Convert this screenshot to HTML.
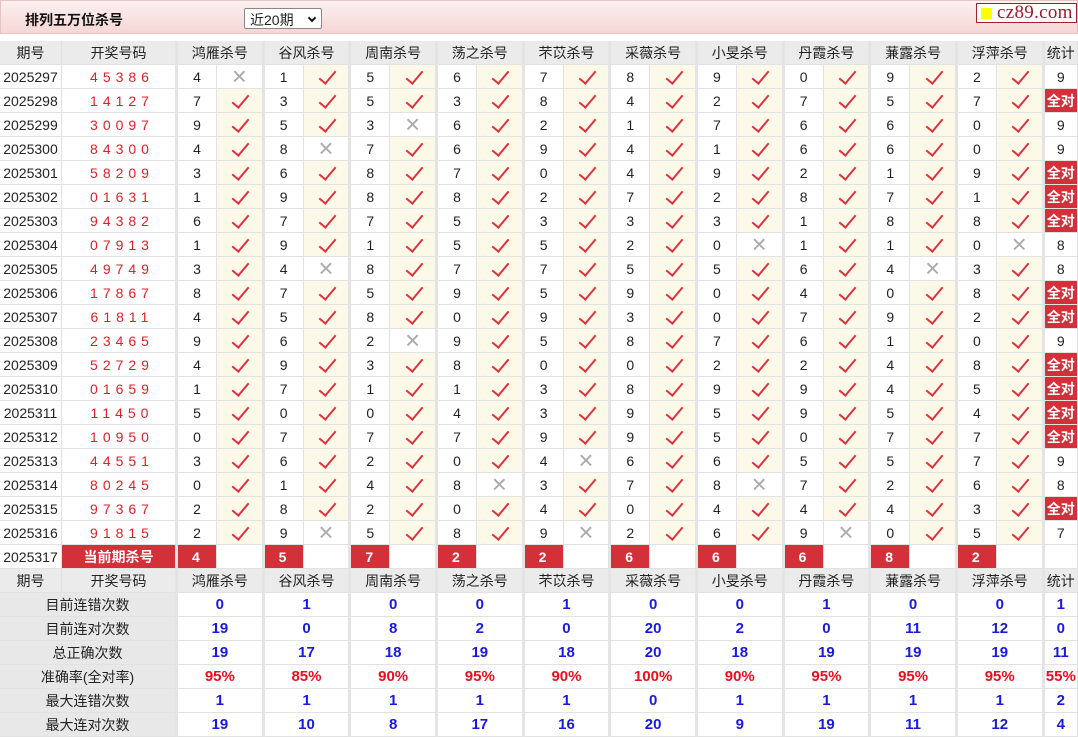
<!DOCTYPE html>
<html><head><meta charset="utf-8">
<style>
*{margin:0;padding:0;box-sizing:border-box}
body{width:1078px;height:737px;overflow:hidden;background:#fff;font-family:"Liberation Sans","Noto Sans CJK SC",sans-serif;font-size:14px;color:#222}
.top{position:absolute;left:0;top:0;width:1078px;height:34px;background:linear-gradient(#fdf0f0,#f6d6d6);border:1px solid #e4c4c4}
.title{position:absolute;left:24px;top:9px;font-weight:bold;font-size:14px;color:#111}
.sel{position:absolute;left:243px;top:7px;width:78px;height:21px;border:1px solid #888;background:#fff;font-size:14px;padding:1px 0 0 5px;border-radius:2px}
.sel b{position:absolute;right:6px;top:6px;width:6px;height:6px;border-right:2px solid #111;border-bottom:2px solid #111;transform:rotate(45deg)}
.logo{position:absolute;left:975px;top:2px;width:101px;height:20px;border:1px solid #a02030;background:#fff;font-family:"Liberation Serif",serif;font-size:19px;color:#a01828;line-height:17px;padding-left:20px;letter-spacing:0.3px}
.logo i{position:absolute;left:4px;top:4px;width:11px;height:11px;background:#ffff00}
table{position:absolute;left:0;top:41px;border-collapse:separate;border-spacing:0;table-layout:fixed;width:1078px}
td{height:24px;border-bottom:1px solid #e2e2e2;border-right:1px solid #e2e2e2;text-align:center;font-size:14px;padding:0;overflow:hidden;white-space:nowrap;position:relative}
tr.h td{background:#ebebeb;color:#222}
td.s{border-right:3px solid #e4e4e4}
td.c{color:#e0202a;letter-spacing:5px;padding-left:7px}
td.v{background:#fdf9e8}
td.v::after{content:"";position:absolute;left:50%;top:50%;width:7px;height:15px;margin:-10px 0 0 -3px;border-right:2px solid #e0303f;border-bottom:2px solid #e0303f;transform:rotate(40deg)}
td.x::after{content:"\00D7";position:absolute;left:0;right:0;top:-1px;font-size:26px;color:#aaa;line-height:24px;font-weight:normal}
td.a{background:#d3303a;color:#fff;font-weight:bold}
td.k{background:#d3303a;color:#fff;font-weight:bold;text-align:left;padding-left:14px}
td.l{background:#e8e8e8}
td.b{color:#1a1adb;font-weight:bold;font-size:15px}
td.r{color:#e8101a;font-weight:bold;font-size:15px}
</style></head><body>
<div class="top"><div class="title">排列五万位杀号</div><div class="sel">近20期<b></b></div><div class="logo"><i></i>cz89.com</div></div>
<table>
<colgroup><col style="width:62px"><col style="width:116px">
<col style="width:39px"><col style="width:47.67px"><col style="width:39px"><col style="width:47.67px"><col style="width:39px"><col style="width:47.67px"><col style="width:39px"><col style="width:47.67px"><col style="width:39px"><col style="width:47.67px"><col style="width:39px"><col style="width:47.67px"><col style="width:39px"><col style="width:47.67px"><col style="width:39px"><col style="width:47.67px"><col style="width:39px"><col style="width:47.67px"><col style="width:39px"><col style="width:47.67px"><col style="width:33.3px"></colgroup>
<tr class="h"><td>期号</td><td class="s">开奖号码</td><td colspan="2" class="s">鸿雁杀号</td><td colspan="2" class="s">谷风杀号</td><td colspan="2" class="s">周南杀号</td><td colspan="2" class="s">荡之杀号</td><td colspan="2" class="s">芣苡杀号</td><td colspan="2" class="s">采薇杀号</td><td colspan="2" class="s">小旻杀号</td><td colspan="2" class="s">丹霞杀号</td><td colspan="2" class="s">蒹露杀号</td><td colspan="2" class="s">浮萍杀号</td><td>统计</td></tr>
<tr><td>2025297</td><td class="c s">45386</td><td>4</td><td class="x s"></td><td>1</td><td class="v s"></td><td>5</td><td class="v s"></td><td>6</td><td class="v s"></td><td>7</td><td class="v s"></td><td>8</td><td class="v s"></td><td>9</td><td class="v s"></td><td>0</td><td class="v s"></td><td>9</td><td class="v s"></td><td>2</td><td class="v s"></td><td>9</td></tr>
<tr><td>2025298</td><td class="c s">14127</td><td>7</td><td class="v s"></td><td>3</td><td class="v s"></td><td>5</td><td class="v s"></td><td>3</td><td class="v s"></td><td>8</td><td class="v s"></td><td>4</td><td class="v s"></td><td>2</td><td class="v s"></td><td>7</td><td class="v s"></td><td>5</td><td class="v s"></td><td>7</td><td class="v s"></td><td class="a">全对</td></tr>
<tr><td>2025299</td><td class="c s">30097</td><td>9</td><td class="v s"></td><td>5</td><td class="v s"></td><td>3</td><td class="x s"></td><td>6</td><td class="v s"></td><td>2</td><td class="v s"></td><td>1</td><td class="v s"></td><td>7</td><td class="v s"></td><td>6</td><td class="v s"></td><td>6</td><td class="v s"></td><td>0</td><td class="v s"></td><td>9</td></tr>
<tr><td>2025300</td><td class="c s">84300</td><td>4</td><td class="v s"></td><td>8</td><td class="x s"></td><td>7</td><td class="v s"></td><td>6</td><td class="v s"></td><td>9</td><td class="v s"></td><td>4</td><td class="v s"></td><td>1</td><td class="v s"></td><td>6</td><td class="v s"></td><td>6</td><td class="v s"></td><td>0</td><td class="v s"></td><td>9</td></tr>
<tr><td>2025301</td><td class="c s">58209</td><td>3</td><td class="v s"></td><td>6</td><td class="v s"></td><td>8</td><td class="v s"></td><td>7</td><td class="v s"></td><td>0</td><td class="v s"></td><td>4</td><td class="v s"></td><td>9</td><td class="v s"></td><td>2</td><td class="v s"></td><td>1</td><td class="v s"></td><td>9</td><td class="v s"></td><td class="a">全对</td></tr>
<tr><td>2025302</td><td class="c s">01631</td><td>1</td><td class="v s"></td><td>9</td><td class="v s"></td><td>8</td><td class="v s"></td><td>8</td><td class="v s"></td><td>2</td><td class="v s"></td><td>7</td><td class="v s"></td><td>2</td><td class="v s"></td><td>8</td><td class="v s"></td><td>7</td><td class="v s"></td><td>1</td><td class="v s"></td><td class="a">全对</td></tr>
<tr><td>2025303</td><td class="c s">94382</td><td>6</td><td class="v s"></td><td>7</td><td class="v s"></td><td>7</td><td class="v s"></td><td>5</td><td class="v s"></td><td>3</td><td class="v s"></td><td>3</td><td class="v s"></td><td>3</td><td class="v s"></td><td>1</td><td class="v s"></td><td>8</td><td class="v s"></td><td>8</td><td class="v s"></td><td class="a">全对</td></tr>
<tr><td>2025304</td><td class="c s">07913</td><td>1</td><td class="v s"></td><td>9</td><td class="v s"></td><td>1</td><td class="v s"></td><td>5</td><td class="v s"></td><td>5</td><td class="v s"></td><td>2</td><td class="v s"></td><td>0</td><td class="x s"></td><td>1</td><td class="v s"></td><td>1</td><td class="v s"></td><td>0</td><td class="x s"></td><td>8</td></tr>
<tr><td>2025305</td><td class="c s">49749</td><td>3</td><td class="v s"></td><td>4</td><td class="x s"></td><td>8</td><td class="v s"></td><td>7</td><td class="v s"></td><td>7</td><td class="v s"></td><td>5</td><td class="v s"></td><td>5</td><td class="v s"></td><td>6</td><td class="v s"></td><td>4</td><td class="x s"></td><td>3</td><td class="v s"></td><td>8</td></tr>
<tr><td>2025306</td><td class="c s">17867</td><td>8</td><td class="v s"></td><td>7</td><td class="v s"></td><td>5</td><td class="v s"></td><td>9</td><td class="v s"></td><td>5</td><td class="v s"></td><td>9</td><td class="v s"></td><td>0</td><td class="v s"></td><td>4</td><td class="v s"></td><td>0</td><td class="v s"></td><td>8</td><td class="v s"></td><td class="a">全对</td></tr>
<tr><td>2025307</td><td class="c s">61811</td><td>4</td><td class="v s"></td><td>5</td><td class="v s"></td><td>8</td><td class="v s"></td><td>0</td><td class="v s"></td><td>9</td><td class="v s"></td><td>3</td><td class="v s"></td><td>0</td><td class="v s"></td><td>7</td><td class="v s"></td><td>9</td><td class="v s"></td><td>2</td><td class="v s"></td><td class="a">全对</td></tr>
<tr><td>2025308</td><td class="c s">23465</td><td>9</td><td class="v s"></td><td>6</td><td class="v s"></td><td>2</td><td class="x s"></td><td>9</td><td class="v s"></td><td>5</td><td class="v s"></td><td>8</td><td class="v s"></td><td>7</td><td class="v s"></td><td>6</td><td class="v s"></td><td>1</td><td class="v s"></td><td>0</td><td class="v s"></td><td>9</td></tr>
<tr><td>2025309</td><td class="c s">52729</td><td>4</td><td class="v s"></td><td>9</td><td class="v s"></td><td>3</td><td class="v s"></td><td>8</td><td class="v s"></td><td>0</td><td class="v s"></td><td>0</td><td class="v s"></td><td>2</td><td class="v s"></td><td>2</td><td class="v s"></td><td>4</td><td class="v s"></td><td>8</td><td class="v s"></td><td class="a">全对</td></tr>
<tr><td>2025310</td><td class="c s">01659</td><td>1</td><td class="v s"></td><td>7</td><td class="v s"></td><td>1</td><td class="v s"></td><td>1</td><td class="v s"></td><td>3</td><td class="v s"></td><td>8</td><td class="v s"></td><td>9</td><td class="v s"></td><td>9</td><td class="v s"></td><td>4</td><td class="v s"></td><td>5</td><td class="v s"></td><td class="a">全对</td></tr>
<tr><td>2025311</td><td class="c s">11450</td><td>5</td><td class="v s"></td><td>0</td><td class="v s"></td><td>0</td><td class="v s"></td><td>4</td><td class="v s"></td><td>3</td><td class="v s"></td><td>9</td><td class="v s"></td><td>5</td><td class="v s"></td><td>9</td><td class="v s"></td><td>5</td><td class="v s"></td><td>4</td><td class="v s"></td><td class="a">全对</td></tr>
<tr><td>2025312</td><td class="c s">10950</td><td>0</td><td class="v s"></td><td>7</td><td class="v s"></td><td>7</td><td class="v s"></td><td>7</td><td class="v s"></td><td>9</td><td class="v s"></td><td>9</td><td class="v s"></td><td>5</td><td class="v s"></td><td>0</td><td class="v s"></td><td>7</td><td class="v s"></td><td>7</td><td class="v s"></td><td class="a">全对</td></tr>
<tr><td>2025313</td><td class="c s">44551</td><td>3</td><td class="v s"></td><td>6</td><td class="v s"></td><td>2</td><td class="v s"></td><td>0</td><td class="v s"></td><td>4</td><td class="x s"></td><td>6</td><td class="v s"></td><td>6</td><td class="v s"></td><td>5</td><td class="v s"></td><td>5</td><td class="v s"></td><td>7</td><td class="v s"></td><td>9</td></tr>
<tr><td>2025314</td><td class="c s">80245</td><td>0</td><td class="v s"></td><td>1</td><td class="v s"></td><td>4</td><td class="v s"></td><td>8</td><td class="x s"></td><td>3</td><td class="v s"></td><td>7</td><td class="v s"></td><td>8</td><td class="x s"></td><td>7</td><td class="v s"></td><td>2</td><td class="v s"></td><td>6</td><td class="v s"></td><td>8</td></tr>
<tr><td>2025315</td><td class="c s">97367</td><td>2</td><td class="v s"></td><td>8</td><td class="v s"></td><td>2</td><td class="v s"></td><td>0</td><td class="v s"></td><td>4</td><td class="v s"></td><td>0</td><td class="v s"></td><td>4</td><td class="v s"></td><td>4</td><td class="v s"></td><td>4</td><td class="v s"></td><td>3</td><td class="v s"></td><td class="a">全对</td></tr>
<tr><td>2025316</td><td class="c s">91815</td><td>2</td><td class="v s"></td><td>9</td><td class="x s"></td><td>5</td><td class="v s"></td><td>8</td><td class="v s"></td><td>9</td><td class="x s"></td><td>2</td><td class="v s"></td><td>6</td><td class="v s"></td><td>9</td><td class="x s"></td><td>0</td><td class="v s"></td><td>5</td><td class="v s"></td><td>7</td></tr>
<tr><td>2025317</td><td class="a s">当前期杀号</td><td class="k">4</td><td class="s"></td><td class="k">5</td><td class="s"></td><td class="k">7</td><td class="s"></td><td class="k">2</td><td class="s"></td><td class="k">2</td><td class="s"></td><td class="k">6</td><td class="s"></td><td class="k">6</td><td class="s"></td><td class="k">6</td><td class="s"></td><td class="k">8</td><td class="s"></td><td class="k">2</td><td class="s"></td><td></td></tr>
<tr class="h"><td>期号</td><td class="s">开奖号码</td><td colspan="2" class="s">鸿雁杀号</td><td colspan="2" class="s">谷风杀号</td><td colspan="2" class="s">周南杀号</td><td colspan="2" class="s">荡之杀号</td><td colspan="2" class="s">芣苡杀号</td><td colspan="2" class="s">采薇杀号</td><td colspan="2" class="s">小旻杀号</td><td colspan="2" class="s">丹霞杀号</td><td colspan="2" class="s">蒹露杀号</td><td colspan="2" class="s">浮萍杀号</td><td>统计</td></tr>
<tr><td colspan="2" class="l s">目前连错次数</td><td colspan="2" class="b s">0</td><td colspan="2" class="b s">1</td><td colspan="2" class="b s">0</td><td colspan="2" class="b s">0</td><td colspan="2" class="b s">1</td><td colspan="2" class="b s">0</td><td colspan="2" class="b s">0</td><td colspan="2" class="b s">1</td><td colspan="2" class="b s">0</td><td colspan="2" class="b s">0</td><td class="b">1</td></tr>
<tr><td colspan="2" class="l s">目前连对次数</td><td colspan="2" class="b s">19</td><td colspan="2" class="b s">0</td><td colspan="2" class="b s">8</td><td colspan="2" class="b s">2</td><td colspan="2" class="b s">0</td><td colspan="2" class="b s">20</td><td colspan="2" class="b s">2</td><td colspan="2" class="b s">0</td><td colspan="2" class="b s">11</td><td colspan="2" class="b s">12</td><td class="b">0</td></tr>
<tr><td colspan="2" class="l s">总正确次数</td><td colspan="2" class="b s">19</td><td colspan="2" class="b s">17</td><td colspan="2" class="b s">18</td><td colspan="2" class="b s">19</td><td colspan="2" class="b s">18</td><td colspan="2" class="b s">20</td><td colspan="2" class="b s">18</td><td colspan="2" class="b s">19</td><td colspan="2" class="b s">19</td><td colspan="2" class="b s">19</td><td class="b">11</td></tr>
<tr><td colspan="2" class="l s">准确率(全对率)</td><td colspan="2" class="r s">95%</td><td colspan="2" class="r s">85%</td><td colspan="2" class="r s">90%</td><td colspan="2" class="r s">95%</td><td colspan="2" class="r s">90%</td><td colspan="2" class="r s">100%</td><td colspan="2" class="r s">90%</td><td colspan="2" class="r s">95%</td><td colspan="2" class="r s">95%</td><td colspan="2" class="r s">95%</td><td class="r">55%</td></tr>
<tr><td colspan="2" class="l s">最大连错次数</td><td colspan="2" class="b s">1</td><td colspan="2" class="b s">1</td><td colspan="2" class="b s">1</td><td colspan="2" class="b s">1</td><td colspan="2" class="b s">1</td><td colspan="2" class="b s">0</td><td colspan="2" class="b s">1</td><td colspan="2" class="b s">1</td><td colspan="2" class="b s">1</td><td colspan="2" class="b s">1</td><td class="b">2</td></tr>
<tr><td colspan="2" class="l s">最大连对次数</td><td colspan="2" class="b s">19</td><td colspan="2" class="b s">10</td><td colspan="2" class="b s">8</td><td colspan="2" class="b s">17</td><td colspan="2" class="b s">16</td><td colspan="2" class="b s">20</td><td colspan="2" class="b s">9</td><td colspan="2" class="b s">19</td><td colspan="2" class="b s">11</td><td colspan="2" class="b s">12</td><td class="b">4</td></tr>
</table>
</body></html>
